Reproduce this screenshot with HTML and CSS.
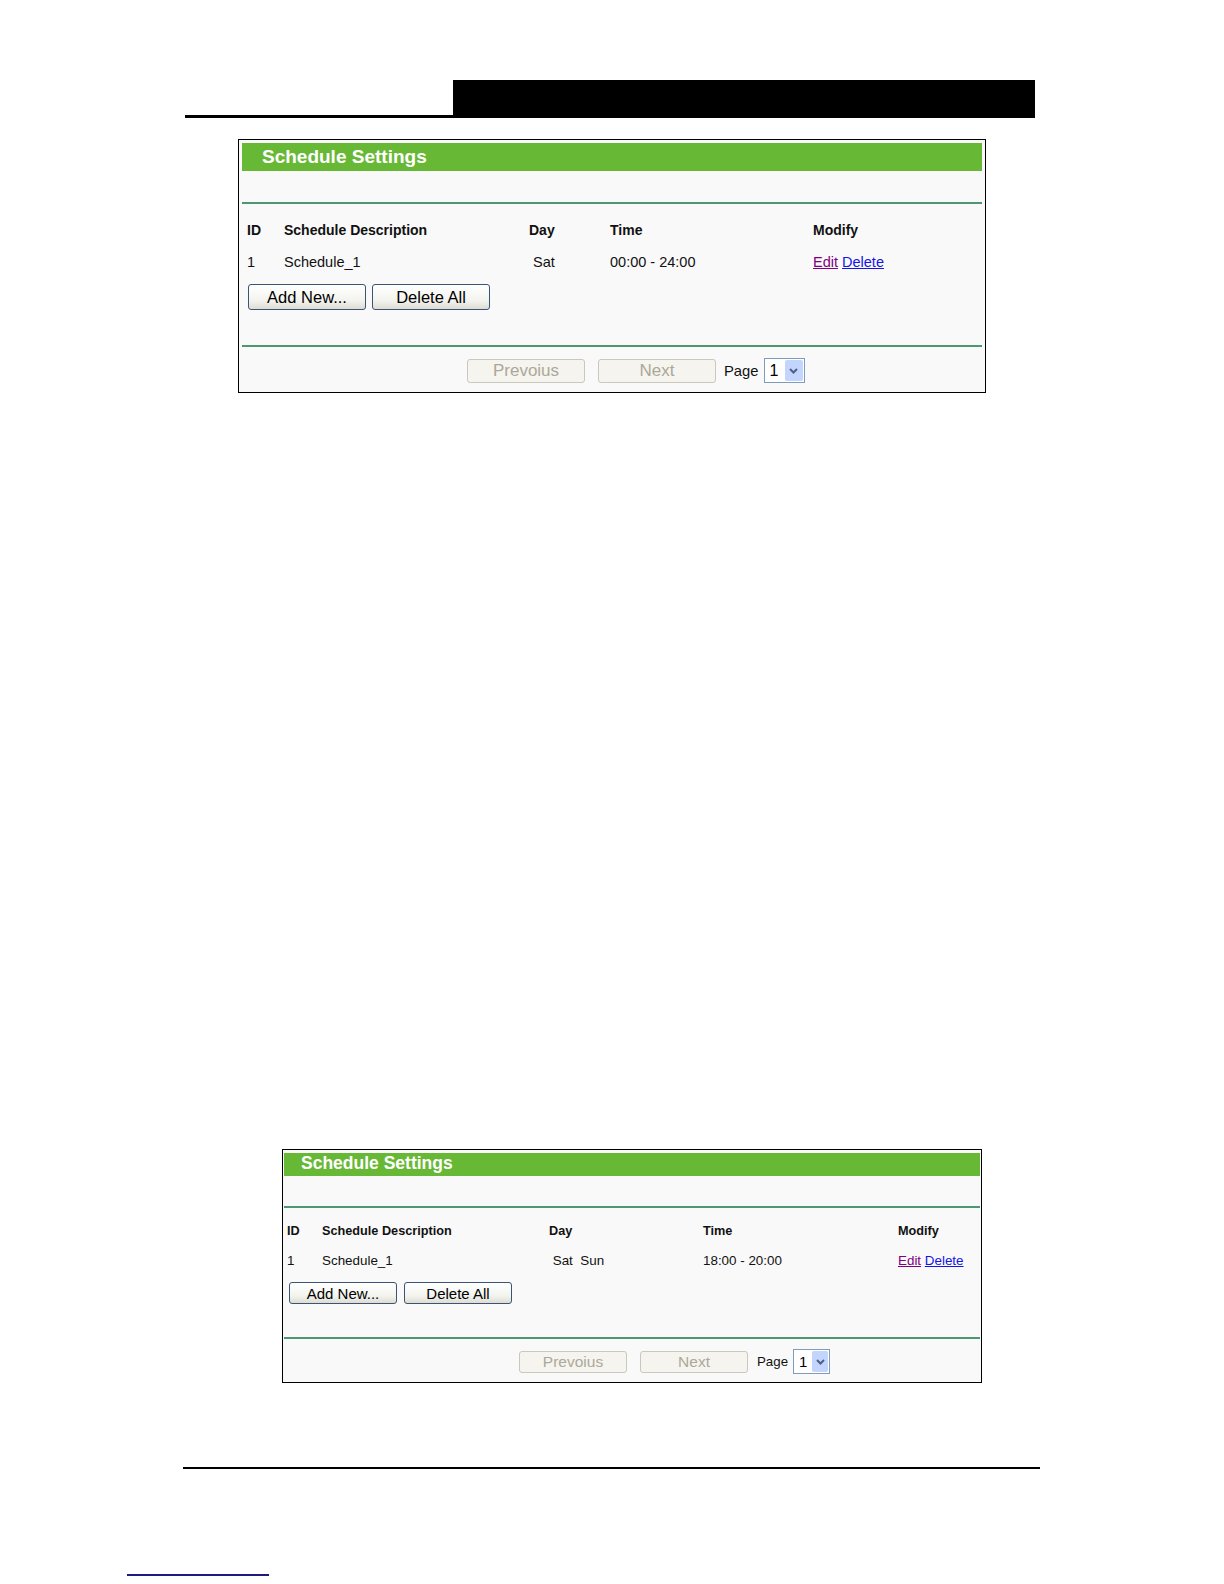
FILE: index.html
```html
<!DOCTYPE html>
<html>
<head>
	<title>Schedule Settings</title>
	<meta charset="utf-8" />
	<link rel="stylesheet" href="styles.css">
</head>
<body>
	<div class="top">
		<div class="top-line"></div>
		<div class="top-box"></div>
	</div>

	<!-- first shot -->
	<div class="panel wide">
		<div class="panel-title">Schedule Settings</div>
		<div class="panel-gap"></div>
		<div class="rule"></div>
		<div class="row head">
			<span>ID</span><span>Schedule Description</span><span>Day</span><span>Time</span><span>Modify</span>
		</div>
		<div class="row data">
			<span>1</span><span>Schedule_1</span><span>&nbsp;Sat</span><span>00:00 - 24:00</span>
			<span><a class="edit" href="#">Edit</a> <a class="del" href="#">Delete</a></span>
		</div>
		<div class="actions">
			<button class="btn">Add New...</button>
			<button class="btn">Delete All</button>
		</div>
		<div class="rule"></div>
		<div class="pager">
			<button class="btn off" disabled>Prevoius</button>
			<button class="btn off" disabled>Next</button>
			<span class="page-label">Page</span>
			<span class="pick">
				<span class="pick-num">1</span>
				<span class="pick-arrow">
					<svg width="9" height="6" viewBox="0 0 9 6"><path d="M1 1 L4.5 4.5 L8 1" fill="none" stroke="#4d6185" stroke-width="2"/></svg>
				</span>
			</span>
		</div>
	</div>

	<!-- second shot -->
	<div class="panel narrow">
		<div class="panel-title">Schedule Settings</div>
		<div class="panel-gap"></div>
		<div class="rule"></div>
		<div class="row head">
			<span>ID</span><span>Schedule Description</span><span>Day</span><span>Time</span><span>Modify</span>
		</div>
		<div class="row data">
			<span>1</span><span>Schedule_1</span><span>&nbsp;Sat&nbsp; Sun</span><span>18:00 - 20:00</span>
			<span><a class="edit" href="#">Edit</a> <a class="del" href="#">Delete</a></span>
		</div>
		<div class="actions">
			<button class="btn">Add New...</button>
			<button class="btn">Delete All</button>
		</div>
		<div class="rule"></div>
		<div class="pager">
			<button class="btn off" disabled>Prevoius</button>
			<button class="btn off" disabled>Next</button>
			<span class="page-label">Page</span>
			<span class="pick">
				<span class="pick-num">1</span>
				<span class="pick-arrow">
					<svg width="9" height="6" viewBox="0 0 9 6"><path d="M1 1 L4.5 4.5 L8 1" fill="none" stroke="#4d6185" stroke-width="2"/></svg>
				</span>
			</span>
		</div>
	</div>

	<div class="foot-line"></div>
	<div class="foot-link"></div>
</body>
</html>
```

FILE: styles.css
```css
body {
	margin: 0;
	padding: 0;
	background-color: #ffffff;
	color: #111111;
	font-family: "Liberation Sans", Arial, sans-serif;
}

/* page header */
.top {
	display: flex;
	align-items: flex-end;
	margin: 80px 0 0 185px;
}
.top-line {
	width: 268px;
	height: 3px;
	background-color: #000000;
}
.top-box {
	width: 582px;
	height: 38px;
	background-color: #000000;
}

/* panel */
.panel {
	box-sizing: border-box;
	border: 1px solid #000000;
	background-color: #f9f9f9;
}
.panel-title {
	background-color: #67b835;
	color: #ffffff;
	font-weight: bold;
}
.rule {
	height: 2px;
	background-color: #4f9673;
}
.row {
	display: grid;
	white-space: nowrap;
}
.head {
	font-weight: bold;
}
.edit {
	color: #800080;
}
.del {
	color: #1414e6;
}
.actions {
	display: flex;
}
.pager {
	display: flex;
	align-items: center;
}

/* buttons */
.btn {
	box-sizing: border-box;
	padding: 0;
	margin: 0;
	font-family: "Liberation Sans", Arial, sans-serif;
	color: #000000;
	border: 1px solid #3a5478;
	border-radius: 3px;
	background: linear-gradient(#ffffff, #f3f3ee 65%, #dedcd2);
}
.btn.off {
	color: #aca899;
	border-color: #cac8bb;
	background: #f5f4ee;
}

/* fake select */
.pick {
	box-sizing: border-box;
	display: flex;
	height: 25px;
	border: 1px solid #7f9db9;
	background-color: #ffffff;
}
.pick-num {
	flex: 1;
	padding-left: 5px;
	line-height: 23px;
	color: #000000;
}
.pick-arrow {
	display: flex;
	align-items: center;
	justify-content: center;
	margin: 1px;
	border-radius: 2px;
	background-color: #c3d5fc;
}

/* first shot sizes */
.wide {
	width: 748px;
	margin: 21px 0 0 238px;
	padding: 3px 3px 9px;
}
.wide .panel-title {
	height: 28px;
	line-height: 28px;
	font-size: 19px;
	padding-left: 20px;
}
.wide .panel-gap {
	height: 31px;
}
.wide .row {
	grid-template-columns: 37px 245px 81px 203px 1fr;
	padding-left: 5px;
}
.wide .head {
	padding-top: 15px;
	line-height: 22px;
	font-size: 14px;
}
.wide .data {
	padding-top: 10px;
	line-height: 22px;
	font-size: 14.5px;
}
.wide .actions {
	gap: 6px;
	margin: 11px 0 35px 6px;
}
.wide .actions .btn {
	width: 118px;
	height: 26px;
	font-size: 16.5px;
}
.wide .pager {
	margin-top: 11px;
	padding-left: 225px;
}
.wide .pager .btn {
	width: 118px;
	height: 24px;
	font-size: 17px;
	margin-right: 13px;
}
.wide .page-label {
	margin: 0 5px 0 -5px;
	font-size: 14.8px;
}
.wide .pick {
	width: 41px;
}
.wide .pick-num {
	font-size: 16px;
}
.wide .pick-arrow {
	width: 18px;
}

/* second shot sizes */
.narrow {
	width: 700px;
	margin: 756px 0 0 282px;
	padding: 3px 1px 8px;
}
.narrow .panel-title {
	height: 23px;
	line-height: 20px;
	font-size: 17.5px;
	padding-left: 17px;
}
.narrow .panel-gap {
	height: 30px;
}
.narrow .row {
	grid-template-columns: 35px 227px 154px 195px 1fr;
	padding-left: 3px;
}
.narrow .head {
	padding-top: 13px;
	line-height: 20px;
	font-size: 12.7px;
}
.narrow .data {
	padding-top: 10px;
	line-height: 20px;
	font-size: 13.4px;
}
.narrow .actions {
	gap: 7px;
	margin: 11px 0 33px 5px;
}
.narrow .actions .btn {
	width: 108px;
	height: 22px;
	font-size: 15px;
}
.narrow .pager {
	margin-top: 10px;
	padding-left: 235px;
}
.narrow .pager .btn {
	width: 108px;
	height: 22px;
	font-size: 15.5px;
	margin-right: 13px;
}
.narrow .page-label {
	margin: 0 5px 0 -4px;
	font-size: 13.3px;
}
.narrow .pick {
	width: 37px;
}
.narrow .pick-num {
	font-size: 15px;
}
.narrow .pick-arrow {
	width: 16px;
}

/* page footer */
.foot-line {
	width: 857px;
	height: 2px;
	margin: 84px 0 0 183px;
	background-color: #000000;
}
.foot-link {
	width: 142px;
	height: 2px;
	margin: 105px 0 0 127px;
	background-color: #1c1c7c;
}
```
